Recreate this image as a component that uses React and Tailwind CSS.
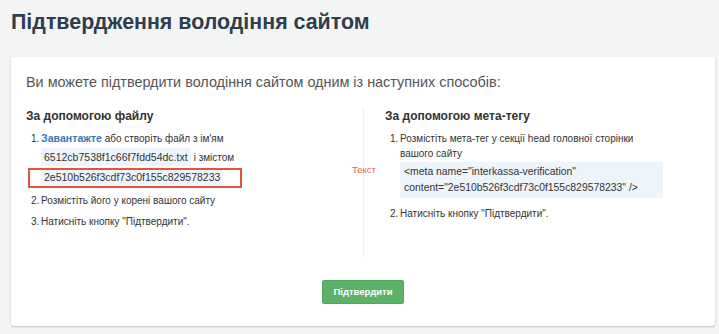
export default function App() {
  const font = { fontFamily: '"Liberation Sans", Arial, sans-serif' };
  return (
    <div className="min-h-[334px] w-full bg-[#f3f5f5] px-[11px] pt-[8px] pb-[7px]" style={font}>
      <h1 className="text-[21.4px] leading-[28px] font-bold text-[#2f3d4c]">Підтвердження володіння сайтом</h1>
      <div className="mt-[21px] rounded-[3px] bg-white shadow-[0_1px_2px_rgba(0,0,0,0.22)] px-[15px] pt-[15px] pb-[22px] w-[704px]">
        <p className="text-[14.4px] leading-[20px] text-[#555]">Ви можете підтвердити володіння сайтом одним із наступних способів:</p>
        <div className="mt-[15px] grid grid-cols-2 h-[150px]">
          <div>
            <h3 className="text-[12px] leading-[18px] font-bold text-[#333]">За допомогою файлу</h3>
            <ol className="mt-[6px] pl-[5px] text-[10px] leading-[15px] text-[#333] flex flex-col gap-[6px]">
              <li className="flex">
                <span className="w-[10px] shrink-0">1.</span>
                <div className="flex flex-col">
                  <div className="h-[16px]">
                    <a className="text-[10.6px] font-bold text-[#337ab7]">Завантажте</a> або створіть файл з ім'ям
                  </div>
                  <div className="mt-[1px] flex items-center h-[18px]">
                    <span className="bg-[#eef5fa] h-[18px] leading-[18px] px-[3px] text-[10.5px]">6512cb7538f1c66f7fdd54dc.txt</span>
                    <span className="ml-[3px]">і змістом</span>
                  </div>
                  <div className="relative mt-[2px] h-[20px]">
                    <span className="inline-block bg-[#eef5fa] h-[18px] leading-[18px] px-[3px] text-[10.5px]">2e510b526f3cdf73c0f155c829578233</span>
                    <div className="absolute left-[-13px] top-0 w-[214px] h-[20px] border-2 border-[#e4533f]"></div>
                  </div>
                </div>
              </li>
              <li className="flex mt-[-1px]">
                <span className="w-[10px] shrink-0">2.</span>
                <span>Розмістіть його у корені вашого сайту</span>
              </li>
              <li className="flex">
                <span className="w-[10px] shrink-0">3.</span>
                <span>Натисніть кнопку "Підтвердити".</span>
              </li>
            </ol>
          </div>
          <div className="relative border-l border-[#eceeef] pl-[21px]">
            <span className="absolute left-[-12px] top-[55px] text-[9.5px] leading-[15px] text-[#f0604d]">Текст</span>
            <h3 className="text-[12px] leading-[18px] font-bold text-[#333]">За допомогою мета-тегу</h3>
            <ol className="mt-[6px] pl-[5px] text-[10px] leading-[15px] text-[#333] flex flex-col gap-[8px]">
              <li className="flex">
                <span className="w-[10px] shrink-0">1.</span>
                <div className="flex flex-col">
                  <span>Розмістіть мета-тег у секції head головної сторінки<br />вашого сайту</span>
                  <div className="mt-[1px] w-[263px] bg-[#eef5fa] px-[4px] py-[2px] leading-[16px] text-[10.4px]">
                    &lt;meta name="interkassa-verification"<br />content="2e510b526f3cdf73c0f155c829578233" /&gt;
                  </div>
                </div>
              </li>
              <li className="flex">
                <span className="w-[10px] shrink-0">2.</span>
                <span>Натисніть кнопку "Підтвердити".</span>
              </li>
            </ol>
          </div>
        </div>
        <div className="mt-[23px] flex justify-center">
          <button className="w-[82px] h-[24px] rounded-[2px] bg-[#5cb268] border border-[#53a85f] text-white text-[9.5px] font-bold">Підтвердити</button>
        </div>
      </div>
    </div>
  );
}
